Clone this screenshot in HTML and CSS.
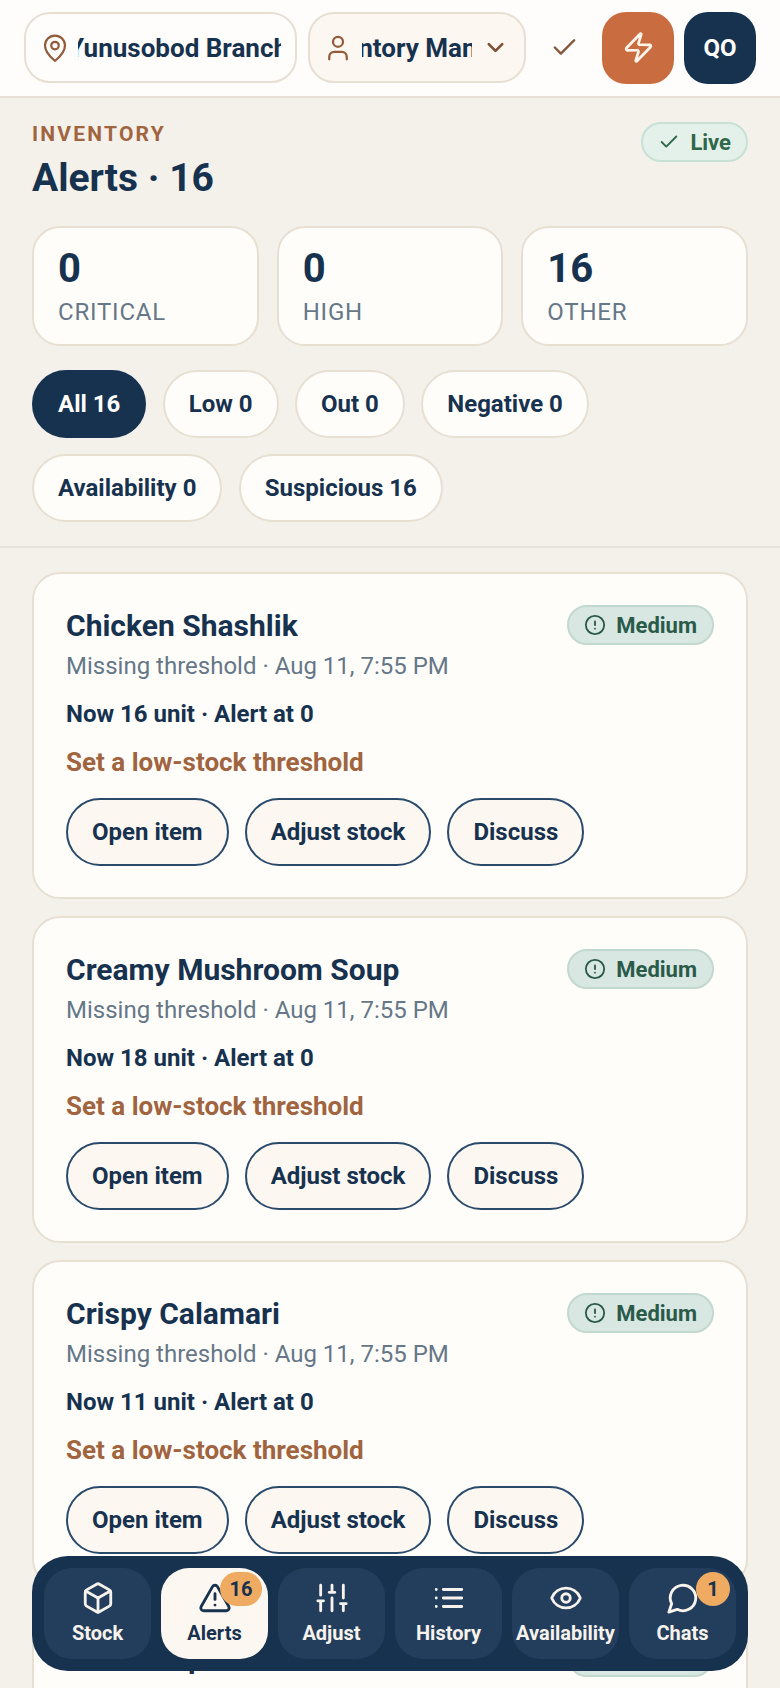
FILE: index.html
```html
<!DOCTYPE html>
<html lang="en">
<head>
<meta charset="utf-8">
<title>Inventory Alerts</title>
<link rel="stylesheet" href="styles.css">
</head>
<body>
<svg class="sprite" aria-hidden="true">
  <symbol id="i-pin" viewBox="0 0 24 24"><path d="M20 10c0 4.993-5.539 10.193-7.399 11.799a1 1 0 0 1-1.202 0C9.539 20.193 4 14.993 4 10a8 8 0 0 1 16 0"/><circle cx="12" cy="10" r="3"/></symbol>
  <symbol id="i-user" viewBox="0 0 24 24"><path d="M19 21v-2a4 4 0 0 0-4-4H9a4 4 0 0 0-4 4v2"/><circle cx="12" cy="7" r="4"/></symbol>
  <symbol id="i-chev" viewBox="0 0 24 24"><path d="m6 9 6 6 6-6"/></symbol>
  <symbol id="i-check" viewBox="0 0 24 24"><path d="M20 6 9 17l-5-5"/></symbol>
  <symbol id="i-zap" viewBox="0 0 24 24"><path d="M4 14a1 1 0 0 1-.78-1.63l9.9-10.2a.5.5 0 0 1 .86.46l-1.92 6.02A1 1 0 0 0 13 10h7a1 1 0 0 1 .78 1.63l-9.9 10.2a.5.5 0 0 1-.86-.46l1.92-6.02A1 1 0 0 0 11 14z"/></symbol>
  <symbol id="i-box" viewBox="0 0 24 24"><path d="M21 8a2 2 0 0 0-1-1.73l-7-4a2 2 0 0 0-2 0l-7 4A2 2 0 0 0 3 8v8a2 2 0 0 0 1 1.73l7 4a2 2 0 0 0 2 0l7-4A2 2 0 0 0 21 16Z"/><path d="m3.3 7 8.7 5 8.7-5"/><path d="M12 22V12"/></symbol>
  <symbol id="i-tri" viewBox="0 0 24 24"><path d="m21.73 18-8-14a2 2 0 0 0-3.48 0l-8 14A2 2 0 0 0 4 21h16a2 2 0 0 0 1.73-3"/><path d="M12 9v4"/><path d="M12 17h.01"/></symbol>
  <symbol id="i-sliders" viewBox="0 0 24 24"><path d="M4 21v-7M4 10V3M12 21v-9M12 8V3M20 21v-5M20 12V3M2 14h4M10 8h4M18 16h4"/></symbol>
  <symbol id="i-list" viewBox="0 0 24 24"><path d="M3 12h.01M3 18h.01M3 6h.01M8 12h13M8 18h13M8 6h13"/></symbol>
  <symbol id="i-eye" viewBox="0 0 24 24"><path d="M2.062 12.348a1 1 0 0 1 0-.696 10.75 10.75 0 0 1 19.876 0 1 1 0 0 1 0 .696 10.75 10.75 0 0 1-19.876 0"/><circle cx="12" cy="12" r="3"/></symbol>
  <symbol id="i-chat" viewBox="0 0 24 24"><path d="M7.9 20A9 9 0 1 0 4 16.1L2 22Z"/></symbol>
  <symbol id="i-alert" viewBox="0 0 24 24"><circle cx="12" cy="12" r="10"/><path d="M12 8v4M12 16h.01"/></symbol>
</svg>

<div class="app">
  <header class="topbar">
    <div class="select select-branch">
      <svg class="ic ic-select"><use href="#i-pin"/></svg>
      <span class="clip"><span class="clip-text clip-branch">Yunusobod Branch</span></span>
    </div>
    <div class="select select-role">
      <svg class="ic ic-select"><use href="#i-user"/></svg>
      <span class="clip clip-r"><span class="clip-text clip-role">Inventory Manager</span></span>
      <svg class="ic ic-chev"><use href="#i-chev"/></svg>
    </div>
    <div class="done"><svg class="ic ic-done"><use href="#i-check"/></svg></div>
    <div class="square square-orange"><svg class="ic ic-zap"><use href="#i-zap"/></svg></div>
    <div class="square square-navy">QO</div>
  </header>

  <section class="summary">
    <div class="heading-row">
      <div>
        <div class="eyebrow">INVENTORY</div>
        <h1 class="title">Alerts · 16</h1>
      </div>
      <div class="live"><svg class="ic ic-live"><use href="#i-check"/></svg>Live</div>
    </div>

    <div class="stats">
      <div class="stat"><div class="stat-num">0</div><div class="stat-label">CRITICAL</div></div>
      <div class="stat"><div class="stat-num">0</div><div class="stat-label">HIGH</div></div>
      <div class="stat"><div class="stat-num">16</div><div class="stat-label">OTHER</div></div>
    </div>

    <div class="chips">
      <div class="chip chip-on">All 16</div>
      <div class="chip">Low 0</div>
      <div class="chip">Out 0</div>
      <div class="chip">Negative 0</div>
      <div class="chip">Availability 0</div>
      <div class="chip">Suspicious 16</div>
    </div>
  </section>

  <main class="list">
    <article class="card">
      <div class="card-top"><h2 class="card-title">Chicken Shashlik</h2><div class="sev"><svg class="ic ic-sev"><use href="#i-alert"/></svg>Medium</div></div>
      <div class="meta">Missing threshold · Aug 11, 7:55 PM</div>
      <div class="now">Now 16 unit · Alert at 0</div>
      <div class="hint">Set a low-stock threshold</div>
      <div class="actions"><div class="btn">Open item</div><div class="btn">Adjust stock</div><div class="btn">Discuss</div></div>
    </article>
    <article class="card">
      <div class="card-top"><h2 class="card-title">Creamy Mushroom Soup</h2><div class="sev"><svg class="ic ic-sev"><use href="#i-alert"/></svg>Medium</div></div>
      <div class="meta">Missing threshold · Aug 11, 7:55 PM</div>
      <div class="now">Now 18 unit · Alert at 0</div>
      <div class="hint">Set a low-stock threshold</div>
      <div class="actions"><div class="btn">Open item</div><div class="btn">Adjust stock</div><div class="btn">Discuss</div></div>
    </article>
    <article class="card">
      <div class="card-top"><h2 class="card-title">Crispy Calamari</h2><div class="sev"><svg class="ic ic-sev"><use href="#i-alert"/></svg>Medium</div></div>
      <div class="meta">Missing threshold · Aug 11, 7:55 PM</div>
      <div class="now">Now 11 unit · Alert at 0</div>
      <div class="hint">Set a low-stock threshold</div>
      <div class="actions"><div class="btn">Open item</div><div class="btn">Adjust stock</div><div class="btn">Discuss</div></div>
    </article>
    <article class="card">
      <div class="card-top"><h2 class="card-title">Beef Soup</h2><div class="sev"><svg class="ic ic-sev"><use href="#i-alert"/></svg>Medium</div></div>
    </article>
  </main>

  <nav class="tabbar">
    <div class="tab"><svg class="ic ic-tab"><use href="#i-box"/></svg><span>Stock</span></div>
    <div class="tab tab-on"><svg class="ic ic-tab"><use href="#i-tri"/></svg><span>Alerts</span><b class="badge badge-wide">16</b></div>
    <div class="tab"><svg class="ic ic-tab"><use href="#i-sliders"/></svg><span>Adjust</span></div>
    <div class="tab"><svg class="ic ic-tab"><use href="#i-list"/></svg><span>History</span></div>
    <div class="tab"><svg class="ic ic-tab"><use href="#i-eye"/></svg><span>Availability</span></div>
    <div class="tab"><svg class="ic ic-tab"><use href="#i-chat"/></svg><span>Chats</span><b class="badge">1</b></div>
  </nav>
</div>
</body>
</html>
```

FILE: styles.css
```css
* { box-sizing: border-box; }
html, body { margin: 0; padding: 0; }
body {
  width: 780px;
  height: 1688px;
  overflow: hidden;
  background: #f4f1ea;
  color: #17324f;
  font-family: Roboto, "Liberation Sans", sans-serif;
}
.sprite { display: none; }
.ic {
  display: block;
  flex: none;
  fill: none;
  stroke: currentColor;
  stroke-width: 2;
  stroke-linecap: round;
  stroke-linejoin: round;
}
.app { position: relative; width: 780px; height: 1688px; overflow: hidden; }

/* top bar */
.topbar {
  height: 98px;
  padding: 12px 24px 13px;
  display: flex;
  align-items: center;
  background: #fffdfb;
  border-bottom: 2px solid #eadfd6;
}
.select {
  height: 71px;
  flex: none;
  display: flex;
  align-items: center;
  border: 2px solid #e8dfd3;
  border-radius: 26px;
  font-size: 26px;
  font-weight: 700;
  color: #17324f;
}
.select-branch { width: 273px; padding-left: 14px; background: #fffdfb; margin-right: 11px; }
.select-role { width: 218px; padding-left: 13px; background: #fdf7f1; }
.ic-select { width: 30px; height: 30px; color: #935b3b; margin-right: 8px; stroke-width: 1.8; }
.select-role .ic-select { margin-right: 9px; }
.clip { display: block; overflow: hidden; white-space: nowrap; width: 203px; }
.clip-r { width: 110px; }
.clip-text { display: inline-block; }
.clip-branch { margin-left: -10px; }
.clip-role { margin-left: -53px; }
.ic-chev { width: 27px; height: 27px; color: #7c4f34; margin-left: 10px; stroke-width: 2.3; }
.done { width: 76px; flex: none; display: flex; justify-content: center; }
.ic-done { width: 29px; height: 29px; color: #86573a; }
.square {
  width: 72px;
  height: 72px;
  border-radius: 24px;
  display: flex;
  align-items: center;
  justify-content: center;
  flex: none;
}
.square-orange { background: #c96d41; color: #fff4ea; }
.square-navy { background: #17324f; color: #fffdfb; margin-left: 10px; font-size: 24px; font-weight: 700; }
.ic-zap { width: 33px; height: 33px; }

/* summary */
.summary {
  padding: 24px 32px 24px;
  border-bottom: 2px solid #e8e3da;
}
.heading-row { display: flex; justify-content: space-between; align-items: flex-start; }
.eyebrow {
  font-size: 21px;
  line-height: 25px;
  font-weight: 700;
  letter-spacing: 2.2px;
  color: #a0643f;
}
.title {
  margin: 8px 0 0;
  font-size: 39px;
  line-height: 46px;
  font-weight: 700;
  color: #17324f;
}
.live {
  height: 40px;
  padding: 0 15px;
  display: flex;
  align-items: center;
  gap: 10px;
  background: #e3f1ea;
  border: 2px solid #c8e1d5;
  border-radius: 20px;
  font-size: 22px;
  font-weight: 700;
  color: #2f6747;
}
.ic-live { width: 22px; height: 22px; }

.stats { margin-top: 25px; display: grid; grid-template-columns: repeat(3, 1fr); gap: 18px; }
.stat {
  height: 120px;
  padding: 19px 24px 0;
  background: #fffdfa;
  border: 2px solid #e8dfd3;
  border-radius: 28px;
}
.stat-num { font-size: 40px; line-height: 44px; font-weight: 700; color: #17324f; }
.stat-label { margin-top: 6px; font-size: 24px; line-height: 30px; letter-spacing: .8px; color: #667788; }

.chips { margin-top: 24px; display: flex; flex-wrap: wrap; gap: 16px 16.4px; }
.chip {
  height: 68px;
  padding: 0 24px;
  display: flex;
  align-items: center;
  background: #fffdfa;
  border: 2px solid #e8dfd3;
  border-radius: 34px;
  font-size: 24px;
  font-weight: 700;
  color: #17324f;
}
.chip-on { background: #17324f; border-color: #17324f; color: #fffdfb; }

/* cards */
.list { padding: 24px 32px 0; display: flex; flex-direction: column; gap: 17px; }
.card {
  height: 327px;
  padding: 31px 32px 0;
  flex: none;
  background: #fffdfa;
  border: 2px solid #e8dfd3;
  border-radius: 28px;
}
.card-top { height: 42px; display: flex; justify-content: space-between; align-items: flex-start; }
.card-title { margin: 1px 0 0; font-size: 30px; line-height: 40px; font-weight: 700; color: #17324f; }
.sev {
  height: 40px;
  padding: 0 15px;
  display: flex;
  align-items: center;
  gap: 10px;
  background: #d9e7e2;
  border: 2px solid #c1d8cf;
  border-radius: 20px;
  font-size: 22px;
  font-weight: 700;
  color: #2a5a49;
}
.ic-sev { width: 22px; height: 22px; }
.meta { margin-top: 1px; font-size: 24px; line-height: 36px; color: #667788; }
.now { margin-top: 12px; font-size: 24px; line-height: 36px; font-weight: 700; color: #17324f; }
.hint { margin-top: 12px; font-size: 26px; line-height: 36px; font-weight: 700; color: #a0643f; }
.actions { margin-top: 18px; display: flex; gap: 16px; }
.btn {
  height: 68px;
  padding: 0 24px;
  display: flex;
  align-items: center;
  background: #fdf7f1;
  border: 2px solid #2a4a6b;
  border-radius: 34px;
  font-size: 24px;
  font-weight: 700;
  color: #17324f;
}

/* tab bar */
.tabbar {
  position: absolute;
  left: 32px;
  top: 1556px;
  width: 716px;
  height: 115px;
  padding: 12px;
  display: grid;
  grid-template-columns: repeat(6, 1fr);
  gap: 10px;
  background: #17324f;
  border-radius: 36px;
}
.tab {
  position: relative;
  padding-top: 13px;
  display: flex;
  flex-direction: column;
  align-items: center;
  gap: 4px;
  background: #233e5c;
  border-radius: 28px;
  color: #f7f3ec;
  font-size: 20px;
  line-height: 28px;
  font-weight: 700;
}
.tab-on { background: #fdf7f1; color: #17324f; }
.ic-tab { width: 34px; height: 34px; stroke-width: 2; }
.badge {
  position: absolute;
  top: 4px;
  right: 6px;
  min-width: 34px;
  height: 34px;
  padding: 0 5px;
  display: flex;
  align-items: center;
  justify-content: center;
  background: #f0ab62;
  border-radius: 17px;
  color: #17324f;
  font-size: 20px;
  font-weight: 700;
}
.badge-wide { min-width: 42px; }
```
